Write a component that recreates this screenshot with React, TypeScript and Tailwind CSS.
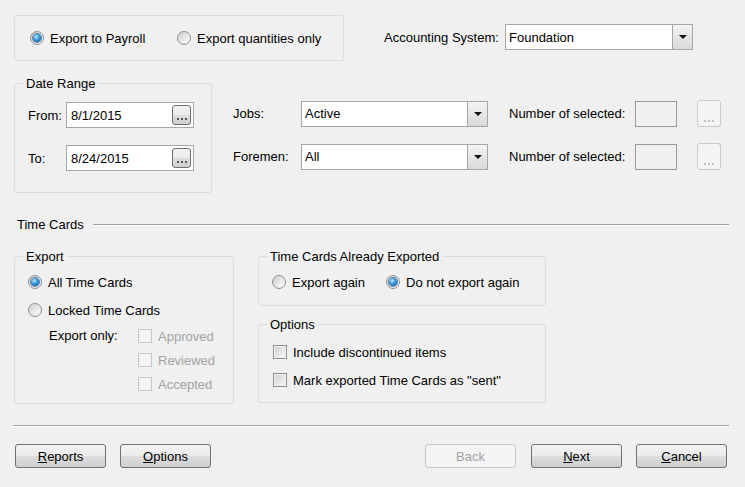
import React from "react";

function GroupBox({ label, className, children }: { label?: string; className: string; children?: React.ReactNode }) {
  return (
    <div className={"relative border border-[#d5dfe5] rounded-[3px] " + className}>
      {label && (
        <span className="absolute -top-[8px] left-[8px] px-[3px] bg-[#f0f0f0] leading-[15px]">{label}</span>
      )}
      {children}
    </div>
  );
}

function Radio({ checked, label }: { checked?: boolean; label: string }) {
  return (
    <div className="flex items-center h-[16px]">
      <div className="w-[14px] h-[14px] rounded-full border border-[#8e8f8f] bg-[linear-gradient(135deg,#d2d2d2,#fafafa)] flex items-center justify-center shrink-0">
        {checked ? (
          <div className="w-[8px] h-[8px] rounded-full bg-[radial-gradient(circle_at_40%_35%,#bfe8ff_0%,#3596dc_45%,#0c4a8e_100%)] shadow-[0_0_0_1px_#5d7fa5]" />
        ) : (
          <div className="w-[10px] h-[10px] rounded-full bg-[linear-gradient(135deg,#cfd0d2,#fdfdfd)]" />
        )}
      </div>
      <span className="ml-[6px] leading-[15px] whitespace-nowrap">{label}</span>
    </div>
  );
}

function Check({ label, disabled }: { label: string; disabled?: boolean }) {
  return (
    <div className="flex items-center h-[16px]">
      {disabled ? (
        <div className="w-[14px] h-[14px] border border-[#c7c7c7] bg-[#f4f4f4] shrink-0" />
      ) : (
        <div className="w-[14px] h-[14px] border border-[#8e8f8f] bg-[linear-gradient(135deg,#cfd1d4,#f9f9f9)] shadow-[inset_0_0_0_1px_#f2f2f2] shrink-0" />
      )}
      <span className={"ml-[6px] leading-[15px] whitespace-nowrap " + (disabled ? "text-[#a3a3a3]" : "")}>{label}</span>
    </div>
  );
}

function Combo({ value, className }: { value: string; className: string }) {
  return (
    <div className={"flex border border-[#a4a6ab] bg-white " + className}>
      <div className="flex-1 flex items-center pl-[3px] leading-[15px]">{value}</div>
      <div className="w-[20px] border-l border-[#a4a6ab] bg-[linear-gradient(#f3f3f3,#d9d9d9)] flex items-center justify-center">
        <div className="w-0 h-0 border-l-[4px] border-r-[4px] border-t-[4px] border-l-transparent border-r-transparent border-t-[#111]" />
      </div>
    </div>
  );
}

function Dots({ color }: { color: string }) {
  return (
    <div className="flex gap-[2px] mt-auto mb-[4px]">
      <div className={"w-[2px] h-[2px] " + color} />
      <div className={"w-[2px] h-[2px] " + color} />
      <div className={"w-[2px] h-[2px] " + color} />
    </div>
  );
}

function DateBox({ value }: { value: string }) {
  return (
    <div className="flex items-center w-[128px] h-[26px] border border-[#a4a6ab] bg-white">
      <div className="flex-1 pl-[4px] leading-[15px]">{value}</div>
      <div className="w-[19px] h-[20px] mr-[2px] rounded-[3px] border border-[#707070] bg-[linear-gradient(#f2f2f2_0%,#ebebeb_50%,#dddddd_51%,#cfcfcf_100%)] flex flex-col items-center">
        <Dots color="bg-[#555]" />
      </div>
    </div>
  );
}

function Btn({ children, disabled }: { children: React.ReactNode; disabled?: boolean }) {
  return (
    <div
      className={
        "w-[91px] h-[24px] rounded-[3px] border flex items-center justify-center leading-[15px] " +
        (disabled
          ? "border-[#c3c7ca] bg-[#f4f4f4] text-[#a3a3a3]"
          : "border-[#707070] bg-[linear-gradient(#f2f2f2_0%,#ebebeb_50%,#dddddd_51%,#cfcfcf_100%)]")
      }
    >
      {children}
    </div>
  );
}

function SelectRow({ label, value }: { label: string; value: string }) {
  return (
    <div className="flex items-center h-[27px]">
      <span className="w-[68px] leading-[15px]">{label}</span>
      <Combo value={value} className="w-[187px] h-[26px]" />
      <span className="ml-[21px] w-[126px] leading-[15px] whitespace-nowrap">Number of selected:</span>
      <div className="w-[42px] h-[26px] border border-[#9a9a9a]" />
      <div className="ml-[20px] w-[24px] h-[27px] rounded-[3px] border border-[#c8cbcd] bg-[#f4f4f4] flex flex-col items-center">
        <Dots color="bg-[#c2c2c2]" />
      </div>
    </div>
  );
}

export default function App() {
  return (
    <div className="w-[745px] h-[487px] bg-[#f0f0f0] text-black text-[13px] font-['Liberation_Sans',Arial,sans-serif] overflow-hidden">
      {/* payroll type + accounting system */}
      <div className="flex pt-[15px] pl-[14px]">
        <GroupBox className="w-[330px] h-[46px] flex items-center pl-[15px]">
          <div className="w-[147px]">
            <Radio checked label="Export to Payroll" />
          </div>
          <Radio label="Export quantities only" />
        </GroupBox>
        <div className="ml-[40px] mt-[9px] flex items-center h-[26px]">
          <span className="w-[121px] leading-[15px] whitespace-nowrap">Accounting System:</span>
          <Combo value="Foundation" className="w-[188px] h-[26px]" />
        </div>
      </div>

      {/* date range, jobs, foremen */}
      <div className="flex pl-[14px] mt-[22px]">
        <GroupBox label="Date Range" className="w-[198px] h-[110px] pt-[18px] pl-[13px]">
          <div className="flex items-center h-[26px]">
            <span className="w-[38px] leading-[15px]">From:</span>
            <DateBox value="8/1/2015" />
          </div>
          <div className="flex items-center h-[26px] mt-[17px]">
            <span className="w-[38px] leading-[15px]">To:</span>
            <DateBox value="8/24/2015" />
          </div>
        </GroupBox>
        <div className="ml-[21px] mt-[17px] flex flex-col gap-[16px]">
          <SelectRow label="Jobs:" value="Active" />
          <SelectRow label="Foremen:" value="All" />
        </div>
      </div>

      {/* time cards header */}
      <div className="flex items-center pl-[17px] pr-[16px] mt-[24px] h-[15px]">
        <span className="leading-[15px]">Time Cards</span>
        <div className="flex-1 ml-[9px] border-t border-[#a0a0a0] border-b border-b-white" />
      </div>

      {/* time card options */}
      <div className="flex pl-[14px] mt-[24px]">
        <GroupBox label="Export" className="w-[220px] h-[148px] pt-[17px] pl-[13px]">
          <Radio checked label="All Time Cards" />
          <div className="mt-[12px]">
            <Radio label="Locked Time Cards" />
          </div>
          <div className="flex mt-[10px]">
            <span className="ml-[21px] w-[89px] h-[16px] leading-[16px]">Export only:</span>
            <div className="flex flex-col gap-[8px]">
              <Check disabled label="Approved" />
              <Check disabled label="Reviewed" />
              <Check disabled label="Accepted" />
            </div>
          </div>
        </GroupBox>
        <div className="ml-[24px] flex flex-col">
          <GroupBox label="Time Cards Already Exported" className="w-[288px] h-[50px] pt-[17px] pl-[13px] flex items-start">
            <div className="w-[114px]">
              <Radio label="Export again" />
            </div>
            <Radio checked label="Do not export again" />
          </GroupBox>
          <GroupBox label="Options" className="w-[288px] h-[79px] mt-[18px] pt-[19px] pl-[14px]">
            <Check label="Include discontinued items" />
            <div className="mt-[12px]">
              <Check label={'Mark exported Time Cards as "sent"'} />
            </div>
          </GroupBox>
        </div>
      </div>

      {/* separator */}
      <div className="ml-[13px] mr-[16px] mt-[21px] border-t border-[#a0a0a0] border-b border-b-white" />

      {/* buttons */}
      <div className="flex pl-[15px] pr-[18px] mt-[17px]">
        <Btn>
          <span className="underline">R</span>eports
        </Btn>
        <div className="ml-[14px]">
          <Btn>
            <span className="underline">O</span>ptions
          </Btn>
        </div>
        <div className="flex-1" />
        <Btn disabled>Back</Btn>
        <div className="ml-[15px]">
          <Btn>
            <span className="underline">N</span>ext
          </Btn>
        </div>
        <div className="ml-[14px]">
          <Btn>
            <span className="underline">C</span>ancel
          </Btn>
        </div>
      </div>
    </div>
  );
}
